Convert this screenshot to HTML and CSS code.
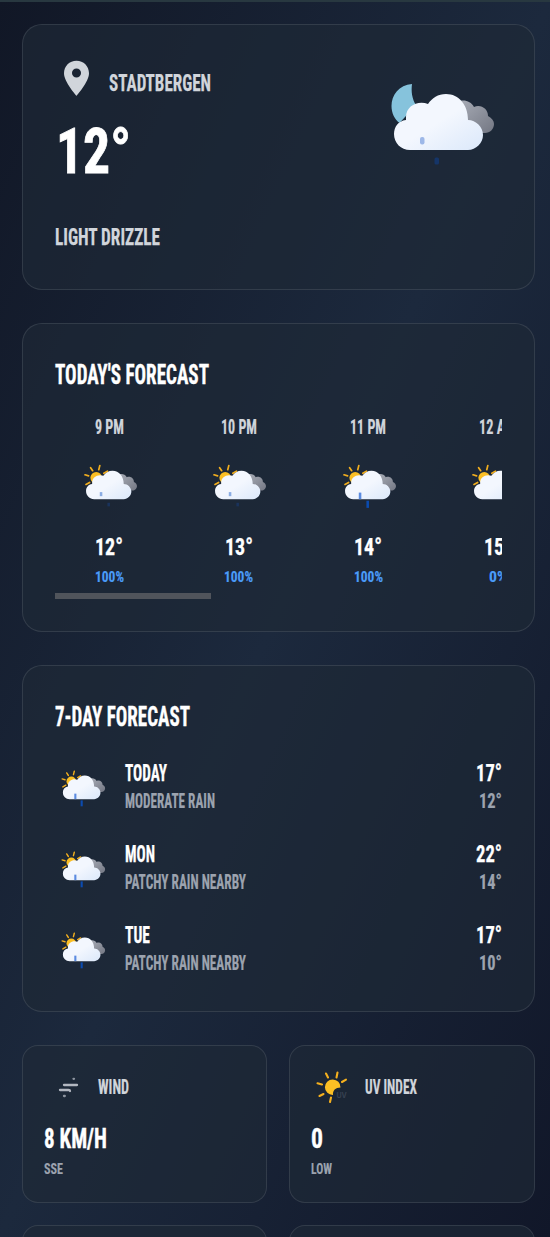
FILE: index.html
```html
<!DOCTYPE html>
<html lang="en">
<head>
<meta charset="utf-8">
<title>Weather</title>
<link rel="stylesheet" href="styles.css">
</head>
<body>
<svg width="0" height="0" class="defs" aria-hidden="true">
  <defs>
    <linearGradient id="cloud" x1="0" y1="0" x2="1" y2="1"><stop offset="0" stop-color="#f3f7fe"/><stop offset=".5" stop-color="#f3f7fe"/><stop offset="1" stop-color="#dbe8fa"/></linearGradient>
    <linearGradient id="grey" x1="0" y1="0" x2="1" y2="1"><stop offset="0" stop-color="#a8acb6"/><stop offset="1" stop-color="#737783"/></linearGradient>
    <symbol id="clouds" viewBox="0 0 108 90">
      <path fill="url(#grey)" d="M68 21c5-3 13-1 16 5 7-3 14 2 14 9 4 2 6 5 6 8 0 5-4 9-9 9H70z"/>
      <path fill="url(#cloud)" d="M78 39c0-15-9-26-22-26-8 0-14 4-18 10-10-4-22 2-22 13v3C8 40 4 46 4 53c0 9 7 16 16 16h58c8 0 15-7 15-15s-7-15-15-15z"/>
    </symbol>
    <symbol id="day" viewBox="0 0 108 90">
      <circle cx="24" cy="27" r="11.500" fill="#fbbf24"/>
      <g stroke="#f0ad1e" stroke-width="3.400" stroke-linecap="round"><path d="M9 23l-7-2M11 36l-7 4M17 13l-4-6M29 11l2-8M39 18l7-4"/></g>
      <use href="#clouds" width="108" height="90"/>
    </symbol>
  </defs>
</svg>
<main class="page">
  <section class="card now">
    <div>
      <div class="place">
        <svg class="pin" viewBox="0 0 26 37"><path d="M13 0C5.700 0 0 5.700 0 13c0 9 13 23.500 13 23.500S26 22 26 13C26 5.700 20.300 0 13 0zm0 17.500a4.700 4.700 0 1 1 0-9.400 4.700 4.700 0 0 1 0 9.400z"/></svg>
        <svg class="t m soft" width="102"><text y="17" textLength="102" lengthAdjust="spacingAndGlyphs">STADTBERGEN</text></svg>
      </div>
      <svg class="t xl" width="75"><text y="46" textLength="75" lengthAdjust="spacingAndGlyphs">12°</text></svg>
      <svg class="t m soft" width="105"><text y="17" textLength="105" lengthAdjust="spacingAndGlyphs">LIGHT DRIZZLE</text></svg>
    </div>
    <svg class="hero" viewBox="0 0 108 90">
      <path fill="#86c3dc" d="M22 3C9 4 1.500 14 1.500 25c0 7 3 13 8 17L26 24c-4-6-5-14-4-21z"/>
      <use href="#clouds" width="108" height="90"/>
      <rect x="30" y="56" width="4.500" height="7.500" rx="2" fill="#9db8e8"/><rect x="44.500" y="76.500" width="4.500" height="7" rx="1.500" fill="#153568"/>
    </svg>
  </section>

  <section class="card today">
    <svg class="t l" width="154"><text y="20" textLength="154" lengthAdjust="spacingAndGlyphs">TODAY'S FORECAST</text></svg>
    <div class="hours">
      <div class="hour">
        <svg class="t s soft" width="29"><text y="14" textLength="29" lengthAdjust="spacingAndGlyphs">9 PM</text></svg>
        <svg class="wx" viewBox="0 0 108 90"><use href="#day"/><rect x="31" y="55" width="5" height="8" fill="#8bade4"/><rect x="46" y="76" width="5" height="7" fill="#1a335c"/></svg>
        <svg class="t m" width="28"><text y="17" textLength="28" lengthAdjust="spacingAndGlyphs">12°</text></svg>
        <svg class="t xs blue" width="29"><text y="11" textLength="29" lengthAdjust="spacingAndGlyphs">100%</text></svg>
      </div>
      <div class="hour">
        <svg class="t s soft" width="36"><text y="14" textLength="36" lengthAdjust="spacingAndGlyphs">10 PM</text></svg>
        <svg class="wx" viewBox="0 0 108 90"><use href="#day"/><rect x="31" y="55" width="5" height="8" fill="#8bade4"/><rect x="46" y="76" width="5" height="7" fill="#1a335c"/></svg>
        <svg class="t m" width="28"><text y="17" textLength="28" lengthAdjust="spacingAndGlyphs">13°</text></svg>
        <svg class="t xs blue" width="29"><text y="11" textLength="29" lengthAdjust="spacingAndGlyphs">100%</text></svg>
      </div>
      <div class="hour">
        <svg class="t s soft" width="36"><text y="14" textLength="36" lengthAdjust="spacingAndGlyphs">11 PM</text></svg>
        <svg class="wx" viewBox="0 0 108 90"><use href="#day"/><rect x="31" y="56" width="5" height="13" fill="#5b8be0"/><rect x="46" y="72" width="5" height="14" fill="#0b4bb0"/></svg>
        <svg class="t m" width="28"><text y="17" textLength="28" lengthAdjust="spacingAndGlyphs">14°</text></svg>
        <svg class="t xs blue" width="29"><text y="11" textLength="29" lengthAdjust="spacingAndGlyphs">100%</text></svg>
      </div>
      <div class="hour">
        <svg class="t s soft" width="37"><text y="14" textLength="37" lengthAdjust="spacingAndGlyphs">12 AM</text></svg>
        <svg class="wx" viewBox="0 0 108 90"><use href="#day"/></svg>
        <svg class="t m" width="28"><text y="17" textLength="28" lengthAdjust="spacingAndGlyphs">15°</text></svg>
        <svg class="t xs blue" width="18"><text y="11" textLength="18" lengthAdjust="spacingAndGlyphs">0%</text></svg>
      </div>
    </div>
    <div class="scroll"></div>
  </section>

  <section class="card week">
    <svg class="t l" width="135"><text y="20" textLength="135" lengthAdjust="spacingAndGlyphs">7-DAY FORECAST</text></svg>
    <div class="days">
      <div class="day">
        <svg class="wx small" viewBox="0 0 108 90"><use href="#day"/><rect x="31" y="56" width="5" height="13" fill="#5b8be0"/><rect x="46" y="72" width="5" height="14" fill="#0b4bb0"/></svg>
        <div class="pair">
          <svg class="t m" width="42"><text y="17" textLength="42" lengthAdjust="spacingAndGlyphs">TODAY</text></svg>
          <svg class="t s dim" width="90"><text y="14" textLength="90" lengthAdjust="spacingAndGlyphs">MODERATE RAIN</text></svg>
        </div>
        <div class="pair end">
          <svg class="t m" width="26"><text y="17" textLength="26" lengthAdjust="spacingAndGlyphs">17°</text></svg>
          <svg class="t s dim" width="23"><text y="14" textLength="23" lengthAdjust="spacingAndGlyphs">12°</text></svg>
        </div>
      </div>
      <div class="day">
        <svg class="wx small" viewBox="0 0 108 90"><use href="#day"/><rect x="31" y="56" width="5" height="13" fill="#5b8be0"/><rect x="46" y="72" width="5" height="14" fill="#0b4bb0"/></svg>
        <div class="pair">
          <svg class="t m" width="30"><text y="17" textLength="30" lengthAdjust="spacingAndGlyphs">MON</text></svg>
          <svg class="t s dim" width="121"><text y="14" textLength="121" lengthAdjust="spacingAndGlyphs">PATCHY RAIN NEARBY</text></svg>
        </div>
        <div class="pair end">
          <svg class="t m" width="26"><text y="17" textLength="26" lengthAdjust="spacingAndGlyphs">22°</text></svg>
          <svg class="t s dim" width="23"><text y="14" textLength="23" lengthAdjust="spacingAndGlyphs">14°</text></svg>
        </div>
      </div>
      <div class="day">
        <svg class="wx small" viewBox="0 0 108 90"><use href="#day"/><rect x="31" y="56" width="5" height="13" fill="#5b8be0"/><rect x="46" y="72" width="5" height="14" fill="#0b4bb0"/></svg>
        <div class="pair">
          <svg class="t m" width="25"><text y="17" textLength="25" lengthAdjust="spacingAndGlyphs">TUE</text></svg>
          <svg class="t s dim" width="121"><text y="14" textLength="121" lengthAdjust="spacingAndGlyphs">PATCHY RAIN NEARBY</text></svg>
        </div>
        <div class="pair end">
          <svg class="t m" width="26"><text y="17" textLength="26" lengthAdjust="spacingAndGlyphs">17°</text></svg>
          <svg class="t s dim" width="23"><text y="14" textLength="23" lengthAdjust="spacingAndGlyphs">10°</text></svg>
        </div>
      </div>
    </div>
  </section>

  <div class="grid">
    <section class="card stat">
      <div class="head">
        <svg class="ico" viewBox="0 0 48 48"><g fill="none" stroke="#b3b8c1" stroke-width="2.300" stroke-linecap="round"><path d="M20 22h13M16 27h8.500q1.500 0 1.500 1"/><path stroke="#8d949f" d="M29.500 15.800h.5M20 33h.8"/></g></svg>
        <svg class="t s soft" width="31"><text y="14" textLength="31" lengthAdjust="spacingAndGlyphs">WIND</text></svg>
      </div>
      <svg class="t l" width="63"><text y="20" textLength="63" lengthAdjust="spacingAndGlyphs">8 KM/H</text></svg>
      <svg class="t xs dim" width="19"><text y="11" textLength="19" lengthAdjust="spacingAndGlyphs">SSE</text></svg>
    </section>
    <section class="card stat">
      <div class="head">
        <svg class="ico" viewBox="0 0 48 48"><path fill="#fbbf24" d="M29.500 24.500a7.800 7.800 0 1 0-7.500 7.500c-.5-4.500 2.500-7.500 7.500-7.500z"/><g stroke="#f5b01e" stroke-width="2.100" stroke-linecap="round"><path d="M11 21.500l-4.500-1.200M12.500 31l-4 2M17 14.500l-2-4M25.500 14.500l1-5M31 19l4-2.300M20 34.500l-1 4.500"/></g><text class="uv" x="25.500" y="35">UV</text></svg>
        <svg class="t s soft" width="52"><text y="14" textLength="52" lengthAdjust="spacingAndGlyphs">UV INDEX</text></svg>
      </div>
      <svg class="t l" width="12"><text y="20" textLength="12" lengthAdjust="spacingAndGlyphs">0</text></svg>
      <svg class="t xs dim" width="21"><text y="11" textLength="21" lengthAdjust="spacingAndGlyphs">LOW</text></svg>
    </section>
    <section class="card stat"></section>
    <section class="card stat"></section>
  </div>
</main>
</body>
</html>
```
FILE: styles.css
```css
* { box-sizing: border-box; }
html, body { margin: 0; height: 1237px; overflow: hidden; }
body {
  background: linear-gradient(to bottom right, #111726, #1c293d 50%, #111729);
  font-family: Roboto, "Liberation Sans", sans-serif;
}
svg { display: block; flex: none; }
.defs { position: absolute; }

.page {
  height: 1237px;
  overflow: hidden;
  border-top: 2px solid #283840;
  padding: 22px 15.500px 0 22px;
  display: flex;
  flex-direction: column;
  gap: 33px;
}
.card {
  flex: none;
  border: 1px solid rgba(255, 255, 255, .1);
  border-radius: 20px;
  background: rgba(31, 41, 54, .66);
  padding: 0 32px;
}

/* condensed lettering: each label is fitted to its own width */
.t { overflow: visible; fill: #fff; stroke: #fff; stroke-width: .25px; font-weight: 700; font-stretch: 75%; }
.xl { height: 46px; font-size: 63px; stroke-width: .8px; }
.l { height: 20px; font-size: 27px; stroke-width: .35px; }
.m { height: 17px; font-size: 23.500px; }
.s { height: 14px; font-size: 19.500px; stroke-width: .2px; }
.xs { height: 11px; font-size: 15.500px; stroke-width: .15px; }
.soft { fill: #d1d5db; stroke: #d1d5db; }
.dim { fill: #9ca3af; stroke: #9ca3af; }
.blue { fill: #4b9cf9; stroke: #4b9cf9; }

.now { height: 266px; display: flex; justify-content: space-between; padding-top: 35px; padding-right: 36px; }
.place { display: flex; align-items: center; gap: 20px; height: 37px; padding-left: 9px; }
.place .t { margin-top: 8px; }
.pin { width: 25px; height: 37px; fill: #d1d5db; }
.now .xl { margin: 30px 0 55px 1px; }
.hero { width: 108px; height: 90px; margin-top: 21px; }

.today { height: 309px; padding-top: 40px; }
.hours { display: flex; overflow: hidden; gap: 21.500px; margin-top: 28px; padding: 8px 0; }
.hour { flex: none; width: 108px; display: flex; flex-direction: column; align-items: center; }
.wx { width: 55px; height: 46px; margin: 30px 0 28px 4px; }
.hour .blue { margin-top: 16px; }
.scroll { width: 156px; height: 6px; margin-top: 3px; background: #50545b; }

.week { height: 347px; padding-top: 40px; }
.days { display: flex; flex-direction: column; gap: 36px; margin-top: 37px; }
.day { display: flex; height: 45px; }
.wx.small { width: 46px; height: 38px; margin: 7px 18px 0 6px; }
.pair { display: flex; flex-direction: column; gap: 13px; padding-top: 1px; }
.end { margin-left: auto; align-items: flex-end; }

.grid { display: grid; grid-template-columns: 1fr 1fr; gap: 22px; margin-top: -.5px; }
.stat { height: 158px; border-radius: 16px; padding: 17px 21px; }
.head { display: flex; align-items: center; gap: 6px; height: 48px; margin-bottom: 17.500px; }
.ico { width: 48px; height: 48px; }
.stat .xs { margin-top: 15px; }
.uv { font: 700 7px Inter, sans-serif; fill: #374151; }
```
